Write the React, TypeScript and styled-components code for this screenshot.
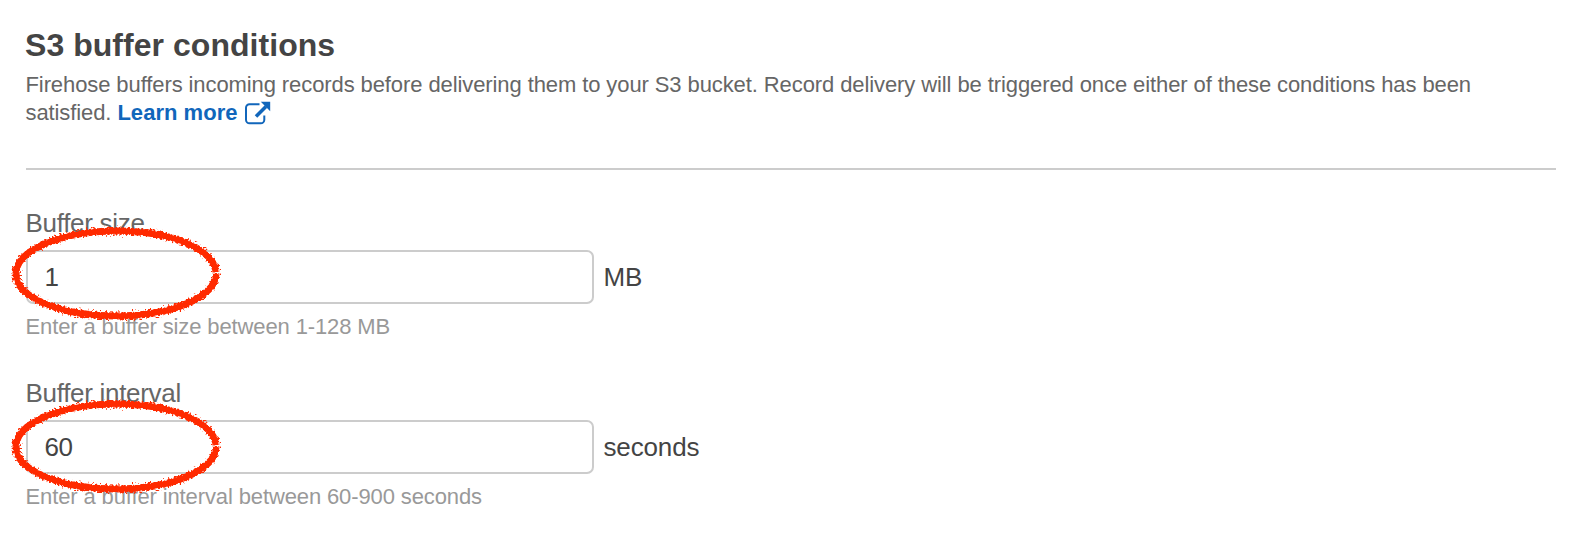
import React from "react";
import styled, { createGlobalStyle } from "styled-components";

const GlobalStyle = createGlobalStyle`
  * { box-sizing: border-box; }
  body {
    margin: 0;
    background: #fff;
    font-family: "Liberation Sans", Arial, sans-serif;
  }
`;

const Page = styled.main`
  height: 540px;
  padding: 27px 20px 0 26px;
  overflow: hidden;
`;

const SectionHeader = styled.header`
  height: 143px;
  border-bottom: 2px solid #ccc;
`;

const Title = styled.h1`
  margin: 0 0 0 -1px;
  font-size: 32px;
  line-height: 36px;
  font-weight: 700;
  letter-spacing: 0.04px;
  color: #444;
  white-space: nowrap;
`;

const Description = styled.p`
  margin: 8px 0 0 -0.5px;
  font-size: 22px;
  line-height: 28px;
  letter-spacing: -0.095px;
  color: #666;
  white-space: nowrap;
`;

const LearnMore = styled.a`
  color: #1166bb;
  font-weight: 700;
  letter-spacing: 0.03px;
  text-decoration: none;
`;

const ExternalIcon = styled.svg`
  display: inline-block;
  width: 26px;
  height: 24px;
  margin-left: 7.5px;
  vertical-align: -5px;
`;

const Fields = styled.form`
  display: flex;
  flex-direction: column;
  padding-top: 38px;
`;

const Field = styled.div`
  display: flex;
  flex-direction: column;
  height: 170px;
`;

const Label = styled.label`
  margin-left: -0.5px;
  font-size: 26px;
  line-height: 30px;
  letter-spacing: -0.3px;
  color: #666;
`;

const InputRow = styled.div`
  position: relative;
  display: flex;
  align-items: center;
  gap: 9.5px;
  height: 54px;
  margin-top: 12px;
`;

const Input = styled.input`
  width: 568px;
  height: 54px;
  padding: 0 17px 0 16.5px;
  border: 2px solid #ccc;
  border-radius: 7px;
  background: #fff;
  color: #444;
  font: 26px "Liberation Sans", Arial, sans-serif;
  letter-spacing: -0.4px;
`;

const Unit = styled.span`
  font-size: 26px;
  line-height: 30px;
  letter-spacing: -0.15px;
  color: #444;
`;

const Hint = styled.span`
  margin: 9px 0 0 -0.5px;
  font-size: 22px;
  line-height: 28px;
  letter-spacing: -0.12px;
  color: #999;
`;

const Marker = styled.svg<{ $top: number }>`
  position: absolute;
  left: -16px;
  top: ${({ $top }) => $top}px;
  width: 212px;
  height: 100px;
  pointer-events: none;
`;

function CrayonRing({ id, top, seed }: { id: string; top: number; seed: number }) {
  const ring =
    "M206 49C203 25 160 8 106 8C52 8 6 27 6 50.5C6 76 54 93 106 93C160 93 205 75 206 50.800";
  return (
    <Marker $top={top} viewBox="0 0 212 100" fill="none" stroke="#ff2a00">
      <filter id={id} x="-5%" y="-8%" width="110%" height="116%" colorInterpolationFilters="sRGB">
        <feTurbulence type="fractalNoise" baseFrequency="0.5" numOctaves={2} seed={seed} />
        <feDisplacementMap in="SourceGraphic" scale={8} xChannelSelector="R" yChannelSelector="G" />
      </filter>
      <path d={ring} strokeWidth="5.5" />
      <path d={ring} strokeWidth="7" filter={`url(#${id})`} />
    </Marker>
  );
}

const fields = [
  { id: "size", label: "Buffer size", value: "1", unit: "MB", hint: "Enter a buffer size between 1-128 MB", top: -27, seed: 4 },
  { id: "interval", label: "Buffer interval", value: "60", unit: "seconds", hint: "Enter a buffer interval between 60-900 seconds", top: -24, seed: 4 },
];

export default function App() {
  return (
    <Page>
      <GlobalStyle />
      <SectionHeader>
        <Title>S3 buffer conditions</Title>
        <Description>
          Firehose buffers incoming records before delivering them to your S3 bucket. Record
          delivery will be triggered once either of these conditions has been
          <br />
          satisfied.{" "}
          <LearnMore href="#">
            Learn more
            <ExternalIcon viewBox="0 0 26 24" fill="none" stroke="#1166bb">
              <path d="M14.5 3.2H4.6A3.6 3.6 0 0 0 1 6.8V18.7A3.6 3.6 0 0 0 4.6 22.3H15.7A3.6 3.6 0 0 0 19.3 18.7V14.5" strokeWidth="2" />
              <path d="M11 15.5L21 5.5" strokeWidth="3.5" />
              <path d="M15.8 0.8H25.2V10.2Z" fill="#1166bb" stroke="none" />
            </ExternalIcon>
          </LearnMore>
        </Description>
      </SectionHeader>
      <Fields>
        {fields.map((f) => (
          <Field key={f.id}>
            <Label htmlFor={f.id}>{f.label}</Label>
            <InputRow>
              <Input id={f.id} defaultValue={f.value} />
              <Unit>{f.unit}</Unit>
              <CrayonRing id={`crayon-${f.id}`} top={f.top} seed={f.seed} />
            </InputRow>
            <Hint>{f.hint}</Hint>
          </Field>
        ))}
      </Fields>
    </Page>
  );
}
